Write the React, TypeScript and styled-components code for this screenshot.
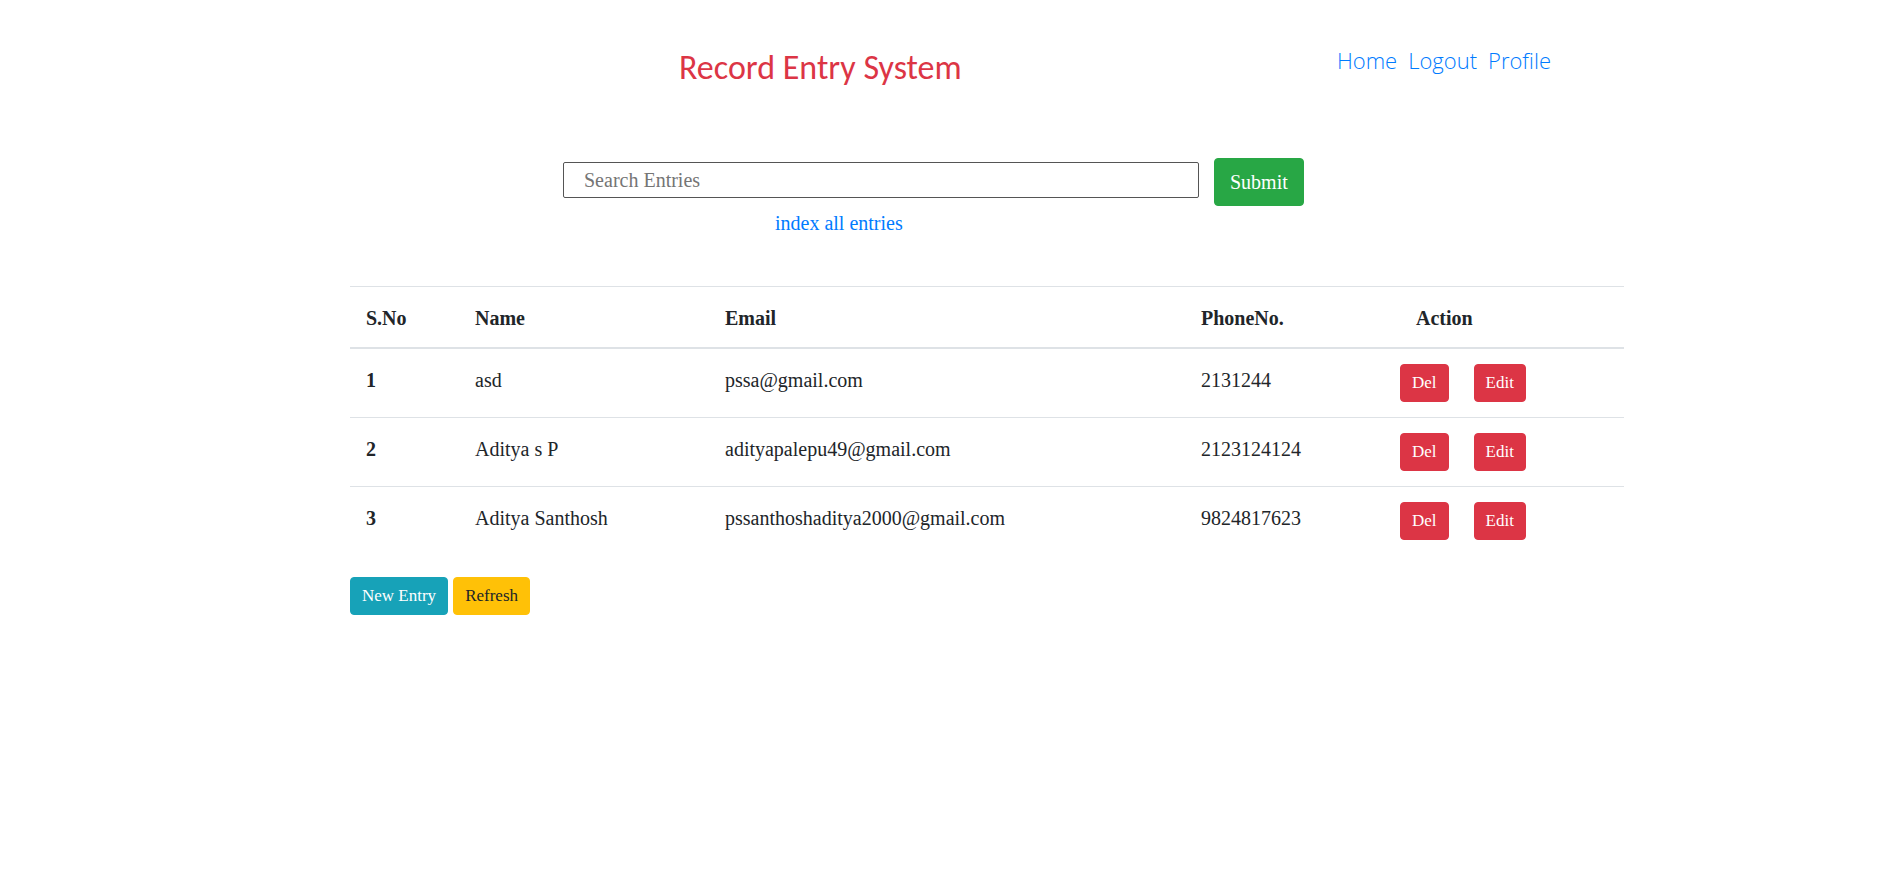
import * as React from 'react';
import styled, { createGlobalStyle } from 'styled-components';

interface Entry {
	id: number;
	name: string;
	email: string;
	phone: string;
}

const entries: Entry[] = [
	{ id: 1, name: 'asd', email: 'pssa@gmail.com', phone: '2131244' },
	{ id: 2, name: 'Aditya s P', email: 'adityapalepu49@gmail.com', phone: '2123124124' },
	{ id: 3, name: 'Aditya Santhosh', email: 'pssanthoshaditya2000@gmail.com', phone: '9824817623' },
];

const GlobalStyle = createGlobalStyle`
	html, body {
		margin: 0;
		padding: 0;
		background: #fff;
	}
	body {
		font-family: "Liberation Serif", "Times New Roman", serif;
		color: #212529;
		font-size: 20px;
		line-height: 1.5;
	}
`;

const Page = styled.div`
	display: flex;
	flex-direction: column;
	min-height: 889px;
`;

const Header = styled.header`
	display: flex;
	flex-direction: row;
	justify-content: space-between;
	align-items: flex-start;
	padding: 0 330px 0 679px;
`;

const Title = styled.h1`
	margin: 48px 0 0 0;
	font-family: Carlito, Lato, "Open Sans", sans-serif;
	font-weight: 400;
	font-size: 34px;
	line-height: 40px;
	color: #dc3545;
`;

const Nav = styled.nav`
	display: flex;
	flex-direction: row;
	gap: 11px;
	margin-top: 45px;
`;

const NavLink = styled.a`
	font-family: "Open Sans", Lato, sans-serif;
	font-weight: 300;
	font-size: 22px;
	line-height: 30px;
	color: #007bff;
	text-decoration: none;
`;

const SearchArea = styled.div`
	display: flex;
	flex-direction: column;
	margin: 70px 0 0 563px;
`;

const SearchRow = styled.form`
	display: flex;
	flex-direction: row;
	align-items: flex-start;
	gap: 15px;
`;

const SearchInput = styled.input`
	box-sizing: border-box;
	width: 636px;
	height: 36px;
	margin-top: 4px;
	padding: 0 20px;
	border: 1px solid #555;
	border-radius: 2px;
	font-family: "Liberation Serif", serif;
	font-size: 20px;
	color: #212529;
	outline: none;

	&::placeholder {
		color: #757575;
	}
`;

const Button = styled.button<{ variant: 'success' | 'danger' | 'info' | 'warning'; size?: 'lg' }>`
	box-sizing: border-box;
	border: 1px solid transparent;
	border-radius: 4px;
	cursor: pointer;
	font-family: "Liberation Serif", serif;
	font-size: ${props => props.size === 'lg' ? '20px' : '17px'};
	line-height: ${props => props.size === 'lg' ? '30px' : '24px'};
	padding: ${props => props.size === 'lg' ? '8px 15px' : '6px 11px'};
	background-color: ${props => ({
		success: '#28a745',
		danger: '#dc3545',
		info: '#17a2b8',
		warning: '#ffc107',
	})[props.variant]};
	border-color: ${props => ({
		success: '#28a745',
		danger: '#dc3545',
		info: '#17a2b8',
		warning: '#ffc107',
	})[props.variant]};
	color: ${props => props.variant === 'warning' ? '#212529' : '#fff'};
`;

const IndexLink = styled.a`
	margin: 2px 0 0 212px;
	font-size: 20px;
	line-height: 30px;
	color: #007bff;
	text-decoration: none;
`;

const Table = styled.table`
	margin: 48px 0 0 350px;
	width: 1274px;
	table-layout: fixed;
	border-collapse: collapse;
	font-size: 20px;
	line-height: 30px;
	color: #212529;
`;

const Th = styled.th<{ width: number; indent?: number }>`
	width: ${props => props.width}px;
	box-sizing: border-box;
	text-align: left;
	vertical-align: bottom;
	padding: 16px 15px 14px ${props => props.indent ?? 16}px;
	border-top: 1px solid #dee2e6;
	border-bottom: 2px solid #dee2e6;
	font-weight: bold;
`;

const Td = styled.td<{ bold?: boolean }>`
	vertical-align: top;
	padding: 16px 15px 15px 16px;
	border-top: 1px solid #dee2e6;
	font-weight: ${props => props.bold ? 'bold' : 'normal'};
`;

const ActionCell = styled.div`
	display: flex;
	flex-direction: row;
	gap: 25px;
	margin: -1px 0 0 -1px;
`;

const Toolbar = styled.div`
	display: flex;
	flex-direction: row;
	gap: 5px;
	margin: 22px 0 0 350px;
`;

export default function App() {
	return (
		<Page>
			<GlobalStyle/>
			<Header>
				<Title>Record Entry System</Title>
				<Nav>
					<NavLink href="#">Home</NavLink>
					<NavLink href="#">Logout</NavLink>
					<NavLink href="#">Profile</NavLink>
				</Nav>
			</Header>
			<SearchArea>
				<SearchRow onSubmit={e => e.preventDefault()}>
					<SearchInput type="text" placeholder="Search Entries"/>
					<Button variant="success" size="lg" type="submit">Submit</Button>
				</SearchRow>
				<IndexLink href="#">index all entries</IndexLink>
			</SearchArea>
			<Table>
				<thead>
					<tr>
						<Th width={109}>S.No</Th>
						<Th width={250}>Name</Th>
						<Th width={476}>Email</Th>
						<Th width={200}>PhoneNo.</Th>
						<Th width={239} indent={31}>Action</Th>
					</tr>
				</thead>
				<tbody>
					{entries.map(entry => (
						<tr key={entry.id}>
							<Td bold>{entry.id}</Td>
							<Td>{entry.name}</Td>
							<Td>{entry.email}</Td>
							<Td>{entry.phone}</Td>
							<Td>
								<ActionCell>
									<Button variant="danger">Del</Button>
									<Button variant="danger">Edit</Button>
								</ActionCell>
							</Td>
						</tr>
					))}
				</tbody>
			</Table>
			<Toolbar>
				<Button variant="info">New Entry</Button>
				<Button variant="warning">Refresh</Button>
			</Toolbar>
		</Page>
	);
}
